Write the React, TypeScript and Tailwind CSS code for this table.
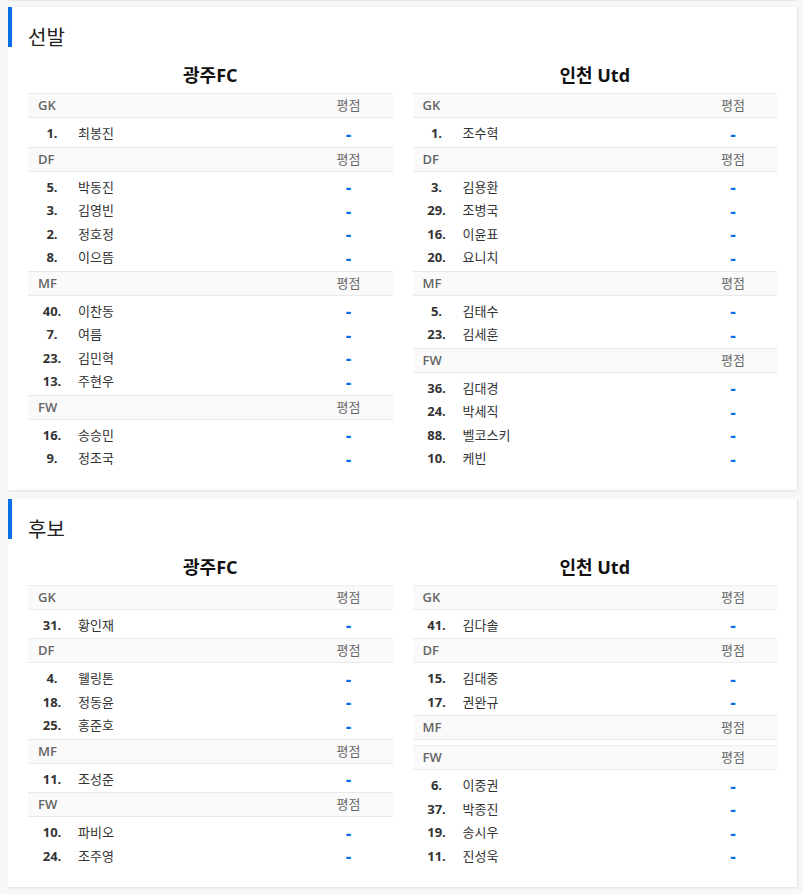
import React from "react";

type P = [number, string];
type Sec = { pos: string; players: P[] };
type Team = { name: string; secs: Sec[] };

const starters: Team[] = [
  {
    name: "광주FC",
    secs: [
      { pos: "GK", players: [[1, "최봉진"]] },
      { pos: "DF", players: [[5, "박동진"], [3, "김영빈"], [2, "정호정"], [8, "이으뜸"]] },
      { pos: "MF", players: [[40, "이찬동"], [7, "여름"], [23, "김민혁"], [13, "주현우"]] },
      { pos: "FW", players: [[16, "송승민"], [9, "정조국"]] },
    ],
  },
  {
    name: "인천 Utd",
    secs: [
      { pos: "GK", players: [[1, "조수혁"]] },
      { pos: "DF", players: [[3, "김용환"], [29, "조병국"], [16, "이윤표"], [20, "요니치"]] },
      { pos: "MF", players: [[5, "김태수"], [23, "김세훈"]] },
      { pos: "FW", players: [[36, "김대경"], [24, "박세직"], [88, "벨코스키"], [10, "케빈"]] },
    ],
  },
];

const subs: Team[] = [
  {
    name: "광주FC",
    secs: [
      { pos: "GK", players: [[31, "황인재"]] },
      { pos: "DF", players: [[4, "웰링톤"], [18, "정동윤"], [25, "홍준호"]] },
      { pos: "MF", players: [[11, "조성준"]] },
      { pos: "FW", players: [[10, "파비오"], [24, "조주영"]] },
    ],
  },
  {
    name: "인천 Utd",
    secs: [
      { pos: "GK", players: [[41, "김다솔"]] },
      { pos: "DF", players: [[15, "김대중"], [17, "권완규"]] },
      { pos: "MF", players: [] },
      { pos: "FW", players: [[6, "이중권"], [37, "박종진"], [19, "송시우"], [11, "진성욱"]] },
    ],
  },
];

function TeamTable({ team }: { team: Team }) {
  return (
    <div className="flex flex-col">
      <div className="mt-[10px] mb-[5px] text-center text-[18px] leading-[26px] font-bold text-[#111]">
        {team.name}
      </div>
      {team.secs.map((s) => (
        <div key={s.pos}>
          <div className="flex h-[25px] items-center border-y border-[#e9e9e9] bg-[#fafafa] text-[13px] leading-[23px] text-[#666]">
            <div className="flex-1 pl-[10px] font-semibold">{s.pos}</div>
            <div className="w-[88px] text-center">평점</div>
          </div>
          <div className="pt-[4px] pb-[1px]">
            {s.players.map(([n, name]) => (
              <div key={n + name} className="flex h-[23.5px] items-center text-[13px] leading-[19.5px] text-[#333]">
                <div className="w-[48px] text-center font-bold">{n}.</div>
                <div className="flex-1 pl-[2px]">{name}</div>
                <div className="w-[88px] pt-[1px] text-center text-[17px] leading-[19.5px] font-bold text-[#0a6ee8]">-</div>
              </div>
            ))}
          </div>
        </div>
      ))}
    </div>
  );
}

function Card({ title, teams, last }: { title: string; teams: Team[]; last?: boolean }) {
  return (
    <div
      className={
        "relative ml-[8px] mr-[6px] bg-white px-[20px] pt-[17px] pb-[18px] shadow-[1px_1px_2px_rgba(0,0,0,0.1)] " +
        (last ? "" : "mb-[9px]")
      }
    >
      <div className="absolute left-0 top-0 h-[40px] w-[4px] bg-[#0a6ee8]" />
      <div className="text-[20px] leading-[28px] text-[#222]">{title}</div>
      <div className="grid grid-cols-2 gap-x-[20px]">
        {teams.map((t) => (
          <TeamTable key={t.name} team={t} />
        ))}
      </div>
    </div>
  );
}

export default function App() {
  return (
    <div className="min-h-[894px] bg-[#f7f7f7] [font-family:'Open_Sans','Noto_Sans_CJK_KR',sans-serif]">
      <div className="ml-[8px] mr-[6px] mb-[6px] h-px bg-[#e6e6e6]" />
      <Card title="선발" teams={starters} />
      <Card title="후보" teams={subs} last />
    </div>
  );
}
